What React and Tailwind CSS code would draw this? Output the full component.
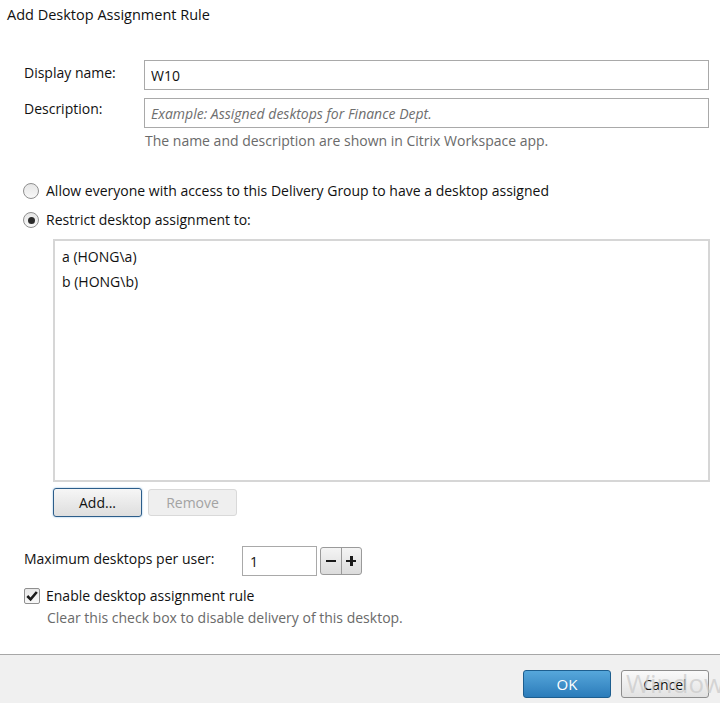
import React, { useState } from 'react';

const font = { fontFamily: '"Open Sans", "Noto Sans", sans-serif' };

const Radio = ({ checked }) => (
    <span className="relative inline-flex w-[16px] h-[16px] rounded-full border border-[#8f8f8f] bg-gradient-to-b from-[#e6e6e6] to-[#f8f8f8] items-center justify-center shrink-0">
        {checked && <span className="w-[7px] h-[7px] rounded-full bg-[#2b2b2b]" />}
    </span>
);

const Checkbox = ({ checked }) => (
    <span className="inline-flex w-[16px] h-[16px] rounded-[2px] border border-[#8f8f8f] bg-gradient-to-b from-[#e8e8e8] to-[#f8f8f8] items-center justify-center shrink-0">
        {checked && (
            <svg width="12" height="12" viewBox="0 0 12 12">
                <path d="M1.3 6 L4.6 9.3 L10.8 2" fill="none" stroke="#1a1a1a" strokeWidth="2.6" />
            </svg>
        )}
    </span>
);

const App = () => {
    const [name, setName] = useState('W10');
    const [max, setMax] = useState(1);

    return (
        <div style={font} className="w-[720px] h-[703px] bg-white flex flex-col text-[14px] text-[#111] overflow-hidden">
            <div className="pl-[7px] pt-[5px] h-[20px] leading-[20px] text-[14.5px] box-content">Add Desktop Assignment Rule</div>

            <div className="pl-[24px] pr-[11px] mt-[35px]">
                <div className="flex items-start">
                    <div className="w-[120px] pt-[3px] leading-[20px]">Display name:</div>
                    <input
                        value={name}
                        onChange={(e) => setName(e.target.value)}
                        className="flex-1 h-[30px] border border-[#a9a9a9] px-[6px] outline-none text-[14px]"
                    />
                </div>
                <div className="flex items-start mt-[8px]">
                    <div className="w-[120px] pt-[1px] leading-[20px]">Description:</div>
                    <input
                        placeholder="Example: Assigned desktops for Finance Dept."
                        className="flex-1 h-[30px] border border-[#a9a9a9] px-[6px] outline-none text-[14px] italic placeholder:text-[#6e6e6e]"
                    />
                </div>
                <div className="pl-[121px] mt-[3px] leading-[20px] text-[#6a6a6a]">
                    The name and description are shown in Citrix Workspace app.
                </div>
            </div>

            <div className="pl-[23px] mt-[30px] flex flex-col gap-[9px]">
                <label className="flex items-center gap-[7px] leading-[20px]">
                    <Radio checked={false} />
                    Allow everyone with access to this Delivery Group to have a desktop assigned
                </label>
                <label className="flex items-center gap-[7px] leading-[20px]">
                    <Radio checked />
                    Restrict desktop assignment to:
                </label>
            </div>

            <div className="ml-[53px] mr-[10px] mt-[9px] h-[243px] border-2 border-[#d6d6d6] pt-[3px] pl-[7px]">
                <div className="h-[25px] leading-[25px]">a (HONG\a)</div>
                <div className="h-[25px] leading-[25px]">b (HONG\b)</div>
            </div>

            <div className="ml-[53px] mt-[6px] flex gap-[6px] items-start">
                <button className="w-[89px] h-[29px] rounded-[3px] border border-[#2c5d8a] shadow-[0_0_2px_#7fb3de] bg-gradient-to-b from-[#f6f6f6] to-[#dedede] text-[14px]">
                    Add...
                </button>
                <button disabled className="w-[89px] h-[27px] mt-[1px] rounded-[3px] border border-[#d9d9d9] bg-[#efefef] text-[#a3a3a3] text-[14px]">
                    Remove
                </button>
            </div>

            <div className="pl-[24px] mt-[29px] flex items-center">
                <div className="w-[218px] leading-[20px] -mt-[4px]">Maximum desktops per user:</div>
                <input
                    value={max}
                    onChange={(e) => setMax(e.target.value)}
                    className="w-[75px] h-[30px] border border-[#a9a9a9] px-[7px] outline-none text-[14px]"
                />
                <div className="ml-[3px] flex h-[28px] w-[42px] rounded-[3px] border border-[#9a9a9a] bg-gradient-to-b from-[#f4f4f4] to-[#dcdcdc] overflow-hidden">
                    <button onClick={() => setMax((m) => Math.max(0, Number(m) - 1))} className="flex-1 flex items-center justify-center border-r border-[#9a9a9a]">
                        <span className="w-[10px] h-[2.5px] bg-[#1a1a1a]" />
                    </button>
                    <button onClick={() => setMax((m) => Number(m) + 1)} className="flex-1 flex items-center justify-center relative">
                        <span className="w-[10px] h-[2.5px] bg-[#1a1a1a]" />
                        <span className="absolute w-[2.5px] h-[10px] bg-[#1a1a1a]" />
                    </button>
                </div>
            </div>

            <div className="pl-[24px] mt-[10px]">
                <label className="flex items-center gap-[6px] leading-[20px]">
                    <Checkbox checked />
                    Enable desktop assignment rule
                </label>
                <div className="pl-[23px] mt-[2px] leading-[20px] text-[#6a6a6a]">
                    Clear this check box to disable delivery of this desktop.
                </div>
            </div>

            <div className="mt-auto h-[49px] border-t border-[#a7a7a7] bg-[#f0f0f0] flex items-start justify-end gap-[10px] pr-[11px] pt-[15px] relative">
                <button className="w-[88px] h-[28px] rounded-[3px] border border-[#1d5e8f] bg-gradient-to-b from-[#56a7db] to-[#2b7cba] text-white text-[15px]">
                    OK
                </button>
                <button className="w-[88px] h-[28px] rounded-[3px] border border-[#8d8d8d] bg-gradient-to-b from-[#fafafa] to-[#e2e2e2] text-[14px] relative z-10">
                    Cancel
                </button>
                <span className="absolute left-[626px] top-[13px] text-[26px] leading-[30px] text-[#c8c8c8]/70 z-20 pointer-events-none whitespace-nowrap">
                    Window
                </span>
            </div>
        </div>
    );
};

export default App;
